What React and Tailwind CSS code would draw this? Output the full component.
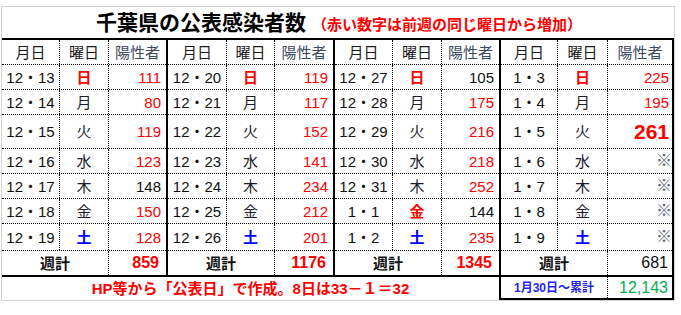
import React from 'react';

const RED = 'text-[#ff0000]';

const groups = [
  {
    w: 'w-[166px]', cols: 'grid-cols-[58px_49px_1fr]', pr: 'pr-[5px]', sumPr: 'pr-[7px]',
    rows: [
      ['12・13', '日', '111', 'r'], ['12・14', '月', '80', 'r'], ['12・15', '火', '119', 'r'],
      ['12・16', '水', '123', 'r'], ['12・17', '木', '148', 'k'], ['12・18', '金', '150', 'r'],
      ['12・19', '土', '128', 'r'],
    ],
    sum: ['859', 'r'],
  },
  {
    w: 'w-[167px]', cols: 'grid-cols-[59px_48px_1fr]', pr: 'pr-[5px]', sumPr: 'pr-[7px]',
    rows: [
      ['12・20', '日', '119', 'r'], ['12・21', '月', '117', 'r'], ['12・22', '火', '152', 'r'],
      ['12・23', '水', '141', 'r'], ['12・24', '木', '234', 'r'], ['12・25', '金', '212', 'r'],
      ['12・26', '土', '201', 'r'],
    ],
    sum: ['1176', 'r'],
  },
  {
    w: 'w-[166px]', cols: 'grid-cols-[58px_49px_1fr]', pr: 'pr-[5px]', sumPr: 'pr-[7px]',
    rows: [
      ['12・27', '日', '105', 'k'], ['12・28', '月', '175', 'r'], ['12・29', '火', '216', 'r'],
      ['12・30', '水', '218', 'r'], ['12・31', '木', '252', 'r'], ['1・1', '金', '144', 'k', true],
      ['1・2', '土', '235', 'r'],
    ],
    sum: ['1345', 'r'],
  },
  {
    w: 'w-[173px]', cols: 'grid-cols-[57px_50px_1fr]', pr: 'pr-[3px]', sumPr: 'pr-[4px]',
    rows: [
      ['1・3', '日', '225', 'r'], ['1・4', '月', '195', 'r'], ['1・5', '火', '261', 'big'],
      ['1・6', '水', '※', 'x'], ['1・7', '木', '※', 'x'], ['1・8', '金', '※', 'x'],
      ['1・9', '土', '※', 'x'],
    ],
    sum: ['681', 'k'],
  },
];

const rowH = ['h-[25px]', 'h-[25px]', 'h-[34px]', 'h-[25px]', 'h-[25px]', 'h-[25px]', 'h-[27px]'];

function dayClass(d, holiday) {
  if (d === '日' || holiday) return 'text-[#ff0000] font-bold';
  if (d === '土') return 'text-[#0000ff] font-bold';
  return 'text-[#1c1c2c]';
}

function numClass(kind) {
  if (kind === 'r') return 'text-[15px] text-[#ff0000]';
  if (kind === 'big') return 'text-[21px] font-bold text-[#ff0000]';
  if (kind === 'x') return 'text-[16px] text-[#566474]';
  return 'text-[15px] text-[#111]';
}

function Group({ g }) {
  return (
    <div className={`${g.w} shrink-0 border-r-2 border-black flex flex-col`}>
      {/* header */}
      <div className={`grid ${g.cols} h-[25px] border-b border-dotted border-black text-[15px] leading-none`}>
        <div className="flex items-center justify-center border-r border-dotted border-black text-[#1a1a1a]">月日</div>
        <div className="flex items-center justify-center border-r border-dotted border-black text-[#1a1a1a]">曜日</div>
        <div className="flex items-center justify-center text-[#3b4a5e]">陽性者</div>
      </div>
      {g.rows.map((r, i) => (
        <div key={i} className={`grid ${g.cols} ${rowH[i]} border-b border-dotted border-black leading-none`}>
          <div className="flex items-center justify-center border-r border-dotted border-black text-[15px] text-[#111]">{r[0]}</div>
          <div className={`flex items-center justify-center border-r border-dotted border-black text-[15px] ${dayClass(r[1], r[4])}`}>{r[1]}</div>
          <div className={`flex items-center justify-end ${r[3] === 'x' ? 'pr-0' : g.pr} ${numClass(r[3])}`}>{r[2]}</div>
        </div>
      ))}
      {/* weekly total */}
      <div className="grid grid-cols-[107px_1fr] h-[24px] leading-none">
        <div className="flex items-center justify-center border-r border-dotted border-black text-[15px] font-bold text-[#111]">週計</div>
        <div className={`flex items-center justify-end ${g.sumPr} ${g.sum[1] === 'r' ? 'text-[16px] font-bold text-[#ff0000]' : 'text-[16px] text-[#111]'}`}>
          {g.sum[0]}
        </div>
      </div>
    </div>
  );
}

export default function App() {
  return (
    <div className="w-[681px] h-[315px] bg-white" style={{ fontFamily: '"Liberation Sans", "Noto Sans CJK JP", sans-serif' }}>
      <div className="ml-[1px] mt-[6px] w-[674px] border border-[#d4d4d4] bg-white">
        {/* title */}
        <div className="h-[33px] flex items-center justify-center border-b-2 border-black">
          <div className="flex items-baseline pl-[2px]">
            <span className="text-[21px] font-bold text-black leading-none">千葉県の公表感染者数</span>
            <span className={`ml-[6px] text-[15px] font-bold leading-none ${RED}`}>（赤い数字は前週の同じ曜日から増加）</span>
          </div>
        </div>
        {/* table */}
        <div className="flex border-b-2 border-black">
          {groups.map((g, i) => <Group key={i} g={g} />)}
        </div>
        {/* footer */}
        <div className="flex h-[23px]">
          <div className="w-[497px] flex items-center justify-center">
            <span className={`text-[15px] font-bold leading-none ${RED}`}>HP等から「公表日」で作成。8日は33－１＝32</span>
          </div>
          <div className="w-[175px] grid grid-cols-[107px_1fr] border-l-2 border-r-2 border-b-2 border-black leading-none">
            <div className="flex items-center justify-center border-r border-dotted border-black text-[12px] font-bold text-[#2424f0]">
              1月30日～累計
            </div>
            <div className="flex items-center justify-end pr-[4px] text-[16px] text-[#00b050]">12,143</div>
          </div>
        </div>
      </div>
    </div>
  );
}
